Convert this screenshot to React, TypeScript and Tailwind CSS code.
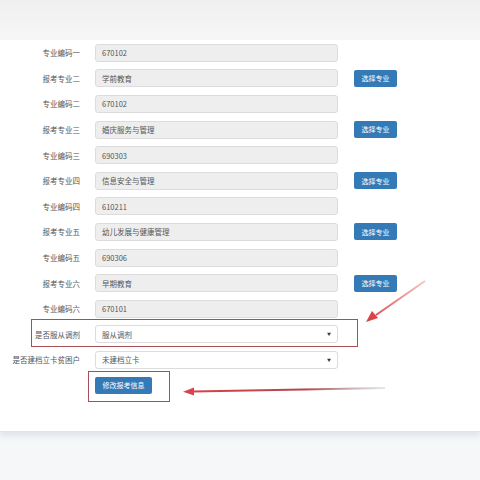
import React from 'react';

interface Row {
  label: string;
  value: string;
  kind: 'input' | 'pick' | 'select';
}

const rows: Row[] = [
  { label: '专业编码一', value: '670102', kind: 'input' },
  { label: '报考专业二', value: '学前教育', kind: 'pick' },
  { label: '专业编码二', value: '670102', kind: 'input' },
  { label: '报考专业三', value: '婚庆服务与管理', kind: 'pick' },
  { label: '专业编码三', value: '690303', kind: 'input' },
  { label: '报考专业四', value: '信息安全与管理', kind: 'pick' },
  { label: '专业编码四', value: '610211', kind: 'input' },
  { label: '报考专业五', value: '幼儿发展与健康管理', kind: 'pick' },
  { label: '专业编码五', value: '690306', kind: 'input' },
  { label: '报考专业六', value: '早期教育', kind: 'pick' },
  { label: '专业编码六', value: '670101', kind: 'input' },
  { label: '是否服从调剂', value: '服从调剂', kind: 'select' },
  { label: '是否建档立卡贫困户', value: '未建档立卡', kind: 'select' },
];

function FormRow({ row }: { row: Row }) {
  const isSelect = row.kind === 'select';
  return (
    <div className="flex h-[25.6px] items-center">
      <div className="w-[80px] shrink-0 text-right text-[7.5px] text-[#555]">{row.label}</div>
      <div
        className={`ml-[15px] flex h-[18px] w-[243px] items-center justify-between rounded-[3px] border border-[#dcdcdc] px-[6px] text-[7.5px] text-[#555] ${
          isSelect ? 'bg-white' : 'bg-[#eeeeee]'
        }`}
      >
        <span>{row.value}</span>
        {isSelect && <span className="text-[4px] text-[#333]">▼</span>}
      </div>
      {row.kind === 'pick' && (
        <div className="ml-[16px] flex h-[17px] w-[43px] items-center justify-center rounded-[2px] bg-[#337ab7] text-[7px] text-white">
          选择专业
        </div>
      )}
    </div>
  );
}

export default function App() {
  return (
    <div
      className="relative h-[480px] w-[480px] overflow-hidden bg-[#f6f7f9]"
      style={{ fontFamily: '"Noto Sans CJK SC", "Noto Sans", sans-serif' }}
    >
      <div className="h-[40px] bg-gradient-to-b from-[#efefef] to-[#f7f7f7]" />
      <div className="flex h-[392px] flex-col border-b border-[#e3e3e3] bg-white shadow-[0_4px_6px_rgba(180,195,210,0.35)]">
        {rows.map((row, i) => (
          <FormRow key={i} row={row} />
        ))}
        <div className="ml-[95px] mt-[4px] flex h-[17px] w-[57px] items-center justify-center rounded-[2px] bg-[#337ab7] text-[7px] text-white">
          修改报考信息
        </div>
      </div>

      {/* annotation boxes */}
      <div className="absolute left-[31px] top-[319px] h-[28px] w-[327px] border-[1.5px] border-[#a94e56]" />
      <div className="absolute left-[88px] top-[371px] h-[31px] w-[82px] border-[1.5px] border-[#a94e56]" />

      {/* arrows */}
      <svg className="absolute left-0 top-0" width="480" height="480" viewBox="0 0 480 480">
        <defs>
          <linearGradient id="a1" x1="425" y1="281" x2="368" y2="321" gradientUnits="userSpaceOnUse">
            <stop offset="0" stopColor="#d9434a" stopOpacity="0.3" />
            <stop offset="1" stopColor="#d9434a" />
          </linearGradient>
          <linearGradient id="a2" x1="385" y1="388" x2="185" y2="392" gradientUnits="userSpaceOnUse">
            <stop offset="0" stopColor="#888" stopOpacity="0.2" />
            <stop offset="0.4" stopColor="#b5454d" />
            <stop offset="1" stopColor="#d9434a" />
          </linearGradient>
        </defs>
        <path d="M425 281 L376 315" stroke="url(#a1)" strokeWidth="2" fill="none" />
        <path d="M366 322 L372 311 L378 318 Z" fill="#d9434a" />
        <path d="M385 388 L193 391.5" stroke="url(#a2)" strokeWidth="2" fill="none" />
        <path d="M183 391.7 L194 387.5 L194 395.5 Z" fill="#d9434a" />
      </svg>
    </div>
  );
}
